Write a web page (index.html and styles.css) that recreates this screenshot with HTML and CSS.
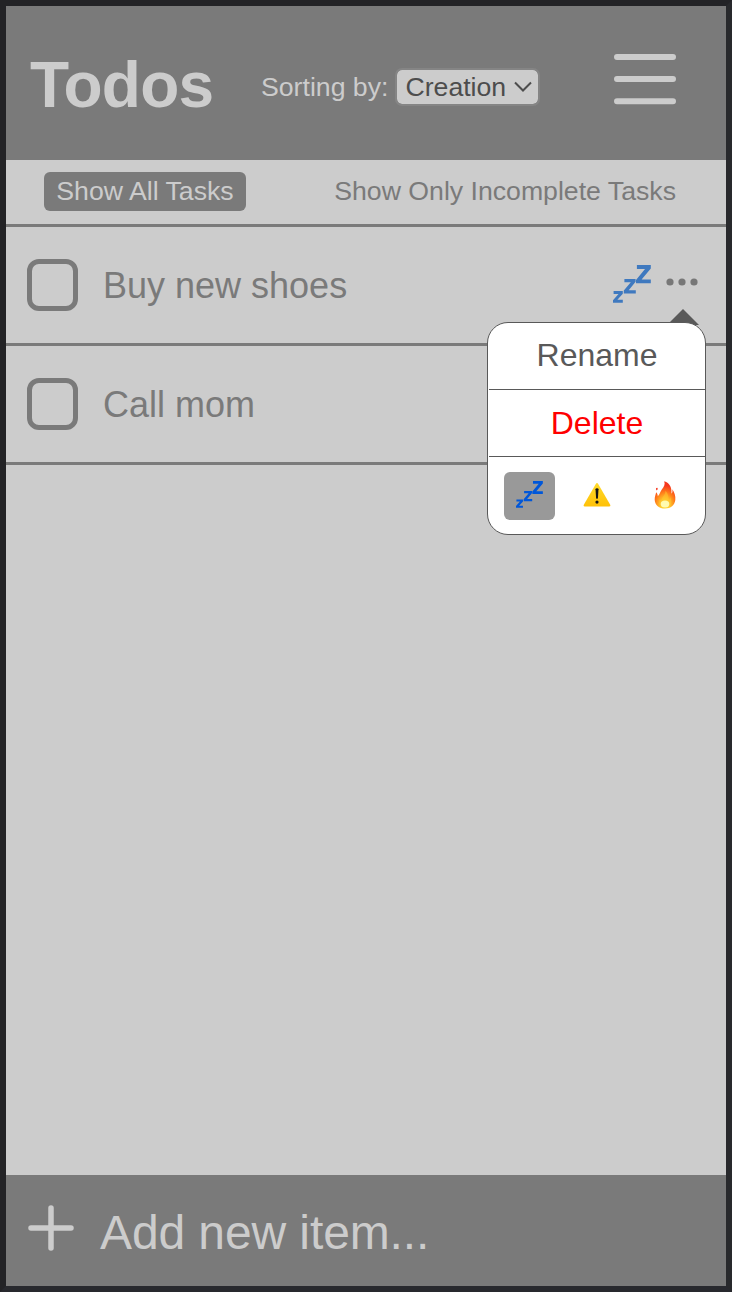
FILE: index.html
```html
<!DOCTYPE html>
<html lang="en">
<head>
<meta charset="utf-8">
<title>Todos</title>
<link rel="stylesheet" href="styles.css">
</head>
<body>
<svg class="defs" aria-hidden="true">
  <symbol id="zzz" viewBox="0 0 38 38">
    <path d="M23.9 0H37.8V3.6L28.6 14.4H37.8V18.3H23V14.9L32 3.9H23.9ZM11.4 14H22.6V16.8L15.7 25.2H22.8V28.5H10.8V25.6L17.8 17.2H11.4ZM.6 26.1H9.8V28.7L4.4 34.8H9.8V37.8H0V35.2L5.5 29H.6Z"/>
  </symbol>
</svg>
<div class="app">
  <header class="header">
    <h1 class="title">Todos</h1>
    <div class="sorting">
      <span>Sorting by:</span>
      <div class="select" role="button">
        <span>Creation</span>
        <svg class="chevron" viewBox="0 0 18 12"><path d="M1 1.5 9 9.5 17 1.5"/></svg>
      </div>
    </div>
    <svg class="burger" viewBox="0 0 62 52"><path d="M3 4H59M3 26H59M3 48.3H59"/></svg>
  </header>
  <nav class="tabs">
    <button class="tab tab-active">Show All Tasks</button>
    <button class="tab">Show Only Incomplete Tasks</button>
  </nav>
  <main class="list">
    <div class="task">
      <span class="checkbox"></span>
      <span class="name">Buy new shoes</span>
      <svg class="priority"><use href="#zzz"/></svg>
      <svg class="more" viewBox="0 0 32 8"><circle cx="4" cy="4" r="3.6"/><circle cx="16" cy="4" r="3.6"/><circle cx="28" cy="4" r="3.6"/></svg>
      <div class="arrow"></div>
      <div class="menu">
        <div class="item">Rename</div>
        <div class="item item-delete">Delete</div>
        <div class="levels">
          <span class="level level-active"><svg class="low"><use href="#zzz"/></svg></span>
          <span class="level"><svg class="medium" viewBox="0 0 28 24">
            <defs><linearGradient id="warn" x2="0" y2="1"><stop stop-color="#ffda2b"/><stop offset="1" stop-color="#ffc107"/></linearGradient></defs>
            <path fill="url(#warn)" d="M12.8.9Q14 -.7 15.2.9L27.2 21.7Q27.9 23.6 26.1 23.6H1.9Q.1 23.6.8 21.7Z"/>
            <path fill="#151515" d="M12.5 6.2Q12.5 5.2 14 5.2T15.5 6.2L14.9 15.2Q14 16.4 13.1 15.2Z"/><circle cx="14" cy="19.1" r="1.6" fill="#151515"/>
          </svg></span>
          <span class="level"><svg class="high" viewBox="0 0 22 28">
            <defs><radialGradient id="flame" cx=".5" cy=".88" r=".85"><stop stop-color="#ffe943"/><stop offset=".28" stop-color="#ffc52a"/><stop offset=".58" stop-color="#ff7a1a"/><stop offset=".86" stop-color="#f5361d"/></radialGradient></defs>
            <path fill="url(#flame)" d="M10.2.3C16 2 18 7 17.4 12.6C18.5 12 18.7 9.5 18.2 8.2C20.4 11 21.8 15 21.3 19C20.7 24.2 16.7 27.5 11 27.5C5.2 27.5 1 24 .7 18.9C.5 15.8 1.8 13.2 2.2 11.2C3.4 12.4 3.8 13.7 3.8 15.2C6.2 12.8 6 10.7 7.8 8.5C10 6 11.4 3.5 10.2.3Z"/>
            <path fill="#ffc52f" d="M11.4 9.8C14.8 13.3 13.9 16.2 15 18.7C16 17.9 16.3 17 16.3 16C18.8 21.6 16 26.6 11 26.6C6.2 26.6 4 22.7 5.5 18.6C6.3 19.6 6.9 19.9 7.6 20C7.5 15.6 11.6 14.6 11.4 9.8Z" opacity=".55"/>
            <ellipse cx="11" cy="23" rx="4.3" ry="3.6" fill="#fffbb0"/>
            <path fill="#f5361d" d="M2 7.3Q3.8 6 3.7 8.3Q2.7 9.8 2.2 9Z"/>
          </svg></span>
        </div>
      </div>
    </div>
    <div class="task">
      <span class="checkbox"></span>
      <span class="name">Call mom</span>
    </div>
  </main>
  <footer class="footer">
    <svg class="plus" viewBox="0 0 46 46"><path d="M3 23H43M23 3V43"/></svg>
    <span class="add">Add new item...</span>
  </footer>
</div>
</body>
</html>
```
FILE: styles.css
```css
* { box-sizing: border-box; }
body {
  margin: 0;
  font-family: "Liberation Sans", Arial, sans-serif;
  color: #7a7a7a;
}
svg { display: block; flex: none; }
.defs { display: none; }
.app {
  height: 1292px;
  display: flex;
  flex-direction: column;
  background: #ccc;
  border: 6px solid;
  border-color: #232326 #28292c #28292e #232326;
}
.header {
  height: 154px;
  display: flex;
  align-items: center;
  background: #7a7a7a;
  color: #ccc;
  padding: 0 50px 0 24px;
}
.title {
  width: 231px;
  margin: 4px 0 0;
  font-size: 64px;
  line-height: 74px;
  letter-spacing: -0.8px;
}
.sorting {
  display: flex;
  align-items: center;
  margin-top: 8px;
  font-size: 26.667px;
  line-height: 32px;
  white-space: nowrap;
}
.select {
  display: flex;
  align-items: center;
  justify-content: space-between;
  width: 145px;
  height: 38px;
  margin-left: 7px;
  padding: 0 6px 0 8px;
  color: #4d4d4d;
  background: #ccc;
  background-clip: padding-box;
  border: 2px solid #858585;
  border-radius: 7px;
}
.chevron { width: 18px; height: 12px; fill: none; stroke: #4d4d4d; stroke-width: 2; }
.burger { width: 62px; height: 52px; margin: -8px 0 0 auto; stroke: #ccc; stroke-width: 6; stroke-linecap: round; }
.tabs {
  height: 67px;
  display: flex;
  align-items: flex-start;
  padding: 12px 38px 0;
  justify-content: space-between;
  border-bottom: 3px solid #7a7a7a;
}
.tab {
  height: 39px;
  padding: 0 12px;
  border: 0;
  border-radius: 6px;
  background: none;
  font: 26.667px/39px "Liberation Sans", Arial, sans-serif;
  color: #7a7a7a;
  white-space: nowrap;
}
.tab-active { width: 202px; background: #7a7a7a; color: #ccc; }
.list { flex: 1; }
.task {
  position: relative;
  height: 119px;
  display: flex;
  align-items: center;
  padding: 0 28px 0 21px;
  border-bottom: 3px solid #7a7a7a;
}
.checkbox { width: 51px; height: 52px; border: 5px solid #7a7a7a; border-radius: 12px; }
.name { flex: 1; margin: 1px 0 0 25px; font-size: 36px; line-height: 42px; }
.priority { width: 38px; height: 38px; fill: #3f79bf; margin: -2px 15px 0 0; }
.more { width: 32px; height: 8px; fill: #777; margin-top: -7px; }
.arrow {
  position: absolute;
  right: 27px;
  top: 82px;
  border: 16px solid transparent;
  border-top: 0;
  border-bottom-color: #595959;
}
.menu {
  position: absolute;
  z-index: 1;
  right: 20px;
  top: 95px;
  width: 219px;
  height: 213px;
  padding-left: 1px;
  background: #fff;
  border: 1px solid #595959;
  border-radius: 21px;
  color: #595959;
}
.item { height: 67px; border-bottom: 1px solid #595959; font-size: 32px; line-height: 65px; text-align: center; }
.item-delete { line-height: 67px; color: #f00; }
.levels { display: flex; gap: 17px; padding: 15px 15px 0; }
.level { width: 51px; height: 48px; flex: none; display: flex; align-items: center; justify-content: center; border-radius: 6px; }
.level-active { background: #999; }
.low { width: 27px; height: 27px; fill: #0057d9; margin-top: -3px; }
.medium { width: 28px; height: 24px; margin: -2px 0 0 -1px; }
.high { width: 22px; height: 28px; margin: -2px 0 0 -1px; }
.footer {
  height: 111px;
  display: flex;
  align-items: center;
  padding-left: 22px;
  background: #7a7a7a;
  color: #ccc;
}
.plus { width: 46px; height: 46px; margin-top: -5px; stroke: #ccc; stroke-width: 5.5; stroke-linecap: round; }
.add { margin: 5px 0 0 26px; font-size: 48px; line-height: 56px; letter-spacing: -0.1px; }
```
